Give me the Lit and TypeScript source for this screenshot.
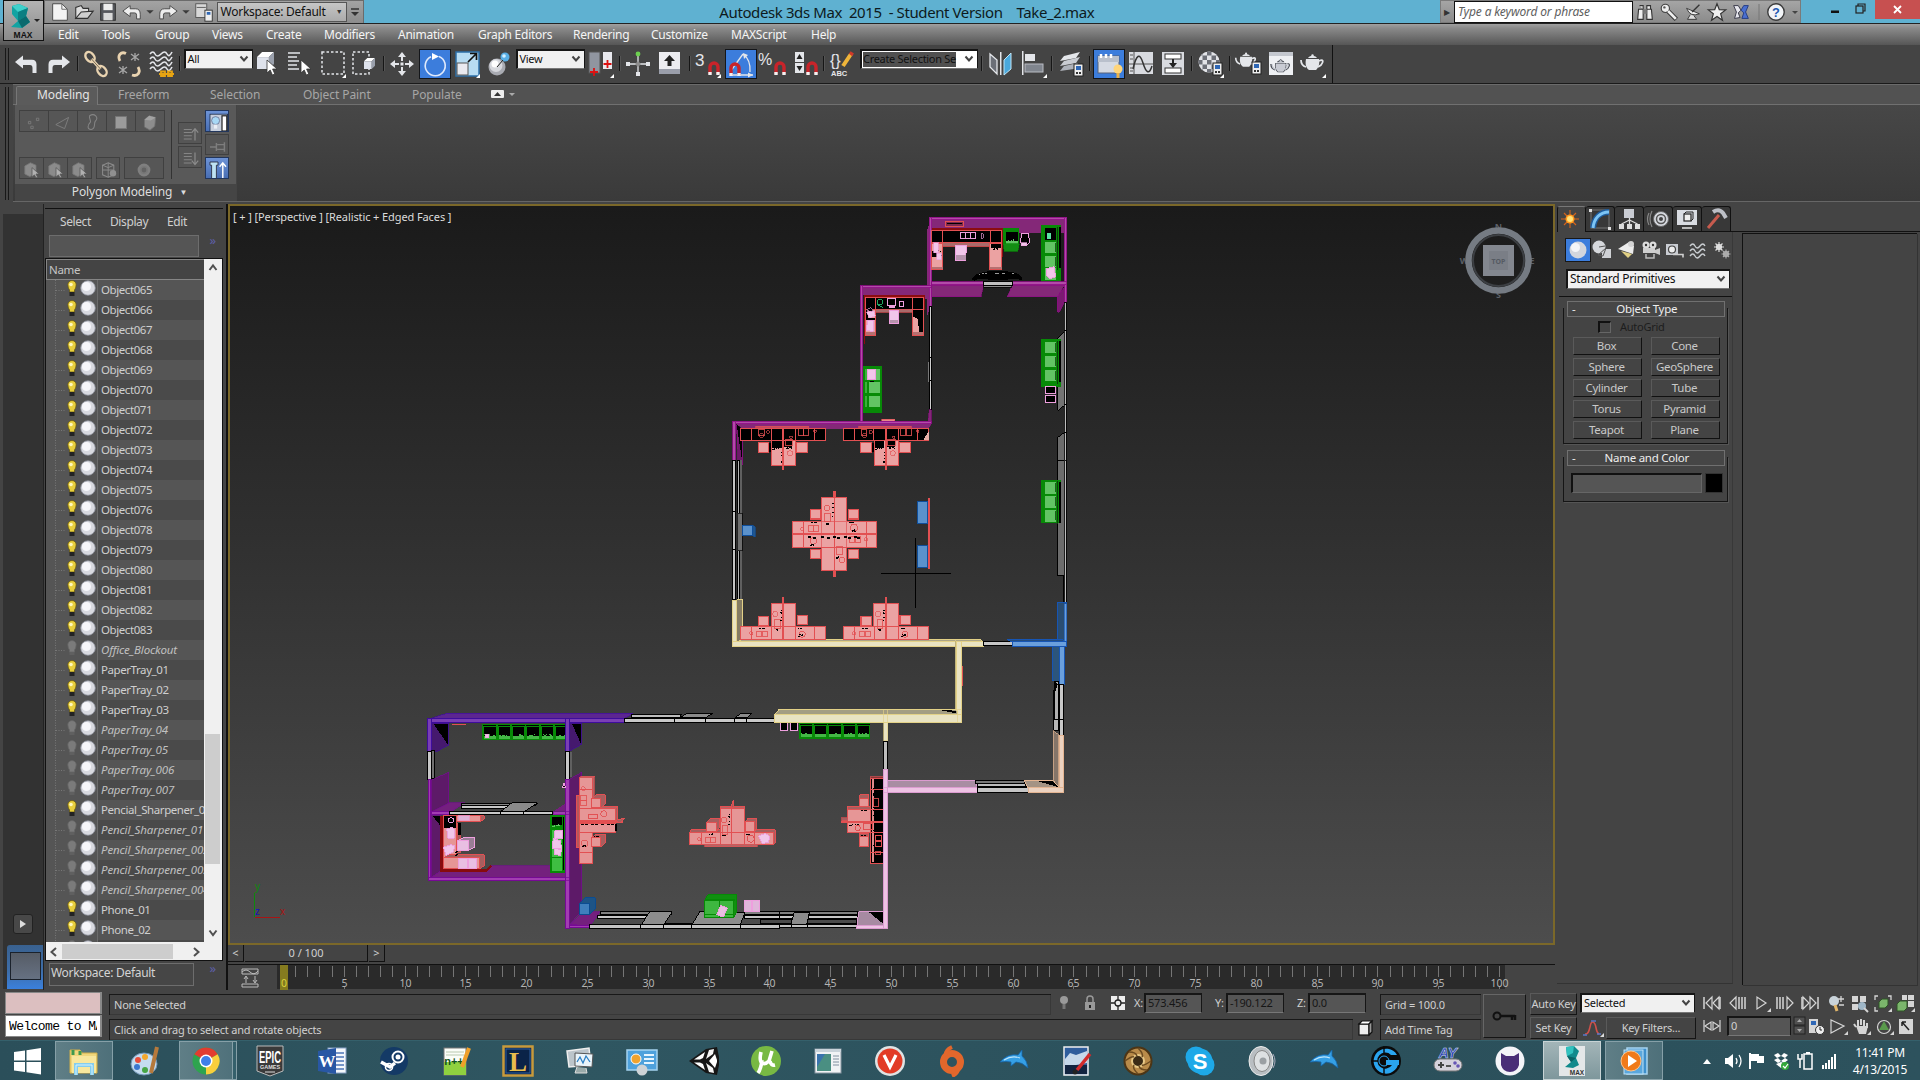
import { LitElement, html, css } from "lit";
import { customElement, state } from "lit/decorators.js";
import { unsafeHTML } from "lit/directives/unsafe-html.js";
import { classMap } from "lit/directives/class-map.js";

/* ---------- small SVG builders ---------- */
const svgBox = (w: number, h: number, body: string, vb = `0 0 ${w} ${h}`) =>
  unsafeHTML(`<svg width="${w}" height="${h}" viewBox="${vb}" fill="none">${body}</svg>`);
const R = (x: number, y: number, w: number, h: number, f = "none", s = "none", sw = 3) =>
  `<rect x="${x}" y="${y}" width="${w}" height="${h}" fill="${f}" stroke="${s}" stroke-width="${sw}"/>`;
const P = (pts: string, f = "none", s = "none", sw = 3) =>
  `<polygon points="${pts}" fill="${f}" stroke="${s}" stroke-width="${sw}"/>`;
const D = (d: string, s = "none", sw = 1.5, f = "none") =>
  `<path d="${d}" fill="${f}" stroke="${s}" stroke-width="${sw}"/>`;
const C = (x: number, y: number, r: number, f = "none", s = "none", sw = 1) =>
  `<circle cx="${x}" cy="${y}" r="${r}" fill="${f}" stroke="${s}" stroke-width="${sw}"/>`;

/* ---------- icons, drawn on a 30x30 grid ---------- */
const W = "#e4e6ea";
const flyout = P("28,25 28,29 24,29", "#fff");
const magnet = (x: number, y: number) =>
  D(`M${x} ${y + 12}v-7a4 4 0 0 1 8 0v7`, "#c8242a", 3.4) + R(x - 1.7, y + 10, 3.4, 3, "#f2f2f2") + R(x + 6.3, y + 10, 3.4, 3, "#f2f2f2");
const cube = (x: number, y: number, s: number) =>
  P(`${x},${y + s * 0.3} ${x + s * 0.3},${y} ${x + s},${y} ${x + s * 0.7},${y + s * 0.3}`, "#fff") +
  R(x, y + s * 0.3, s * 0.7, s * 0.7, "#dfe3ec") +
  P(`${x + s * 0.7},${y + s * 0.3} ${x + s},${y} ${x + s},${y + s * 0.7} ${x + s * 0.7},${y + s}`, "#9aa0ac");
const cursor = (x: number, y: number) =>
  D(`M${x} ${y}v13l3.2-3 2.2 5 2.4-1-2.2-5h4.4z`, "#333", 0.8, "#fff");
const card = (x: number, y: number) =>
  R(x, y, 9, 12, "#eee", "#222", 1) + R(x + 2, y + 2, 5, 4, "#2f67b5") + R(x + 2, y + 8, 2, 2, "#333") + R(x + 5, y + 8, 2, 2, "#333");
const teapot = (c: string) =>
  D("M8 12h13c1 6-1 9-3 11h-7c-3-2-4-6-3-11z", "none", 0, c) + D("M8 20c-3-1-5-4-5-7M21 14c4-2 5 0 2 4l-3 2", c, 1.8) + D("M10 11c2-3 7-3 9 0z", "none", 0, c) + C(14.5, 8.5, 1.2, c);
const waves = (c: string, n = 3) => Array.from({ length: n }, (_, i) => D(`M4 ${5 + i * 5}q3-4 5 0t6 0t6 0t5-2`, c, 1.6)).join("");

const ICONS: Record<string, string> = {
  undo: P("3,13 11,6.500 11,19.500", W) + D("M11 10.800h9q4.500 0 4.500 4.700v8.500h-4v-5q0-3-2.500-3H11z", "none", 0, W),
  redo: P("27,13 19,6.500 19,19.500", W) + D("M19 10.800h-9q-4.500 0-4.500 4.700v8.500h4v-5q0-3 2.500-3H19z", "none", 0, W),
  link: `<ellipse cx="9" cy="8" rx="4" ry="5.500" transform="rotate(-40 9 8)" stroke="#e9d3b0" stroke-width="2.400"/><ellipse cx="21" cy="22" rx="4" ry="5.500" transform="rotate(-40 21 22)" stroke="#e9d3b0" stroke-width="2.400"/>` + D("M10.500 10l9 10", "#e9d3b0", 3.200) + D("M10.500 10l9 10", "#5b5040", .8),
  unlink: D("M12 4.500c-5-2.500-9 2-6 7.500M18 26c6 2 9-3 6-8", "#e9d3b0", 2.800) + D("M17 5l8 6M17 11l8-6M21 4v8M5 18l8 6M5 24l8-6M9 17v8", "#a8a8a8", 1.300),
  bind: waves(W, 4) + D("M13 25h15M15 22.500h4v4.500h-4zM22 22.500h4v4.500h-4z", "#e7a412", 1.800),
  pick: cube(4, 3, 17) + cursor(14, 11),
  byname: D("M3 4h12M3 8h9M3 12h11M3 16h9M3 20h11", W, 1.6) + cursor(16, 11),
  region: `<rect x="4" y="3" width="22" height="22" stroke="${W}" stroke-width="1.500" stroke-dasharray="2.500 2"/>` + flyout,
  windowsel: `<rect x="4" y="3" width="16" height="22" stroke="${W}" stroke-width="1.500" stroke-dasharray="2.500 2"/>` + cube(15, 9, 11),
  move: D("M15 6v6M15 18v6M6 15h6M18 15h6", W, 2) + R(13.500, 13.500, 3, 3, W) + P("15,3 11,8 19,8", W) + P("15,27 11,22 19,22", W) + P("3,15 8,11 8,19", W) + P("27,15 22,11 22,19", W),
  rotate: D("M19 6.500a10 10 0 1 1-8 .2", "#dfe9fb", 1.6) + P("12,3 19,6.500 12,10", "#fff"),
  scale: R(4, 3, 23, 24, "#b8dcf2", "#2d6fa8", 1.5) + R(5, 14, 11, 12, "#e9e9ef", "#555", 1) + D("M16 13l8-8M18 4.500h6.500V11", "#111", 1.7) + flyout,
  pivot: C(13, 18, 8.500, "#a9abb2") + C(12, 16.500, 6.500, "#d6d8dd") + C(11, 15, 3.500, "#fff") + C(21, 8, 4.500, "#58aee4") + C(20, 7, 1.800, "#d2efff") + D("M13 18l6-7", "#222", 1),
  pivotc: R(3, 3, 11, 21, "#9095a0", "#555", 1) + R(17, 3, 9, 17, "#e9e9ee") + D("M8 19v8M4 23h8M21.500 11v8M17.500 15h8", "#d11", 1.800) + flyout,
  manip: D("M15 5v20M5 15h20", W, 1.300) + C(15, 5, 2.400, "#6ccf4f") + R(13, 23, 4, 4, W) + R(3, 13, 4, 4, W) + R(23, 13, 4, 4, W) + P("15,12 18,15 15,18 12,15", "#8d8d8d"),
  keyb: R(4, 3, 21, 19, "#ececf0") + R(4, 20, 21, 5, "#9a9eaa") + P("14.500,6 20,12 9,12", "#222") + R(12.500, 11, 4, 6, "#222"),
  snap: `<text x="2" y="17" font-size="17" font-family="Liberation Sans" fill="${W}">3</text>` + magnet(17, 13) + flyout,
  angle: D("M4 22L17 4M17 4q8 6 7 18M5 25h22", W, 1.300) + P("27,25 22,22.500 22,27.500", W) + P("17,3 22,5 18,9", W) + magnet(5, 13),
  percent: `<text x="0" y="16" font-size="16" font-family="Liberation Sans" fill="${W}">%</text>` + magnet(18, 13),
  spin: R(5, 3, 9, 10, W) + R(5, 14, 9, 10, W) + P("9.500,5 12.500,10 6.500,10", "#222") + P("9.500,22 12.500,17 6.500,17", "#222") + magnet(18, 13),
  named: `<text x="2" y="17" font-size="16" font-family="Liberation Sans" fill="${W}">{}</text><text x="3" y="27" font-size="7.500" font-weight="bold" font-family="Liberation Sans" fill="${W}">ABC</text>` + D("M15 17l8-12", "#efb53a", 4) + D("M22.500 6l1.800-2.600", "#cf3a2a", 4),
  mirror: P("4,5 11,11 11,25 4,18", "#6b6f77", W, 1.300) + R(14, 3, 1.500, 23, W) + P("18,11 25,4 25,20 18,26", "#49a8dc", "#bfe4f6", 1),
  align: R(3, 2, 1.500, 24, W) + R(6, 5, 10, 7, W) + R(6, 15, 18, 8, "#80858e", "#b9bcc3", 1) + flyout,
  layers: P("8,7 24,3 20,9 4,12", W) + P("8,12 24,8 20,14 4,17", "#c9ccd2") + P("8,17 22,14 18,20 4,22", "#aeb2ba") + card(18, 15),
  ribbon: R(4, 6, 21, 17, "#d5dae3", "#56627a", 1) + R(4, 6, 21, 6, "#b9c0cc") + D("M7 4v4M12 4v4M17 4v4", "#fff", 2.500) + C(24, 19, 4.500, "#ffd57a") + R(22.500, 23, 3, 5, "#e9b24a"),
  curve: R(3, 3, 24, 22, "#d9dbe0") + D("M8 3v22M3 15h24", "#555", 1) + D("M7 20q5-22 10-6t9 3", "#333", 1.500) + D("M4 6h3M4 10h3M4 19h3M4 22h3", "#555", 1),
  schem: R(4, 3, 22, 23, "#d9dbe0") + R(7, 5, 16, 5, "#fff", "#333", 1) + R(7, 19, 16, 5, "#fff", "#333", 1) + D("M15 10v6", "#222", 2) + P("15,19 11,14 19,14", "#222"),
  material: `<clipPath id="ball"><circle cx="13" cy="13" r="10.500"/></clipPath><g clip-path="url(#ball)">` + R(2, 2, 22, 22, "#e3e4e8") +
    [0, 1, 2, 3, 4].map((a) => [0, 1, 2, 3, 4].map((b) => ((a + b) % 2 ? "" : R(2 + a * 4.5, 2 + b * 4.5, 4.500, 4.500, "#6d7078"))).join("")).join("") + `</g>` + card(17, 14) + flyout,
  rsetup: `<g transform="translate(-1 -3) scale(.9)">${teapot(W)}</g>` + card(18, 13),
  rframe: R(3, 3, 24, 23, "#eef0f3") + R(3, 3, 24, 4, "#c4c8cf") + `<g transform="translate(2.500 4) scale(.84)">${teapot("#42464e")}<g transform="translate(1.700 2) scale(.88)">${teapot("#c9ccd4")}</g></g>`,
  render: `<g transform="translate(0 -2)">${teapot(W)}</g>` + flyout,
  vert: D("M8 13h3v3h-3zM18 9h3v3h-3zM11 19h3v3h-3z", "#7f7f7f", 1),
  edge: D("M6 17L22 8l-5 14z", "#858585", 1),
  border: D("M12 6c6-4 12 2 7 7-2 3 1 10-5 10s-4-6-1-9c1-2-2-5-1-8z", "#858585", 1.300),
  poly: R(8, 7, 14, 15, "#9b9b9b", "#777", 1),
  elem: P("8,11 14,6 22,8 21,19 15,24 8,20", "#8d8d8d", "#6e6e6e", 1) + P("8,11 14,6 22,8 16,12", "#a3a3a3"),
  cubecur: P("6,10 13,6 20,9 20,21 12,23 6,20", "#8b8b8b", "#777", 1) + D("M15 12v12l3-3 2 4 2-1-2-4h4z", "#555", 1, "#b0b0b0"),
  wirecube: P("7,9 14,6 21,9 21,21 14,24 7,21", "none", "#8b8b8b", 1.300) + D("M14 6v18M7 9l7 3 7-3M7 15h14", "#8b8b8b", 1.200) + C(20, 19, 4, "#909090"),
  ring: C(15, 15, 6.500, "#787878", "#7f7f7f", 3) + C(15, 15, 3, "#636363"),
  listup: D("M6 8h10M6 12h10M6 16h10M6 20h10", "#858585", 1.300) + D("M20 22V8M16 12l4-5 4 5", "#8b8b8b", 1.500),
  listdn: D("M6 8h10M6 12h10M6 16h10M6 20h10", "#858585", 1.300) + D("M20 7v14M16 17l4 5 4-5", "#8b8b8b", 1.500),
  bulbw: R(5, 4, 22, 22, "#c7cfdd", "#1c2b46", 1) + R(20, 6, 6, 19, "#fff", "#222", 1.500) + C(12, 12, 5, "#a8d8f5", "#557", .8) + R(10, 17, 4, 5, "#e9eef5"),
  pin: D("M5 15h8M13 10v10M14 12h9v6h-9M23 9v12", "#7d7d7d", 1.800),
  tarrow: P("5,5 15,5 15,9 13,9 13,26 7,26 7,9 5,9", "#bfe3f3", "#223", 1) + D("M21 26V7M17 11l4-5 4 5", "#fff", 1.800),
};

const SMALL: Record<string, string> = {
  newf: P("4,3 14,3 20,9 20,21 4,21", "#f3f3f3", "#444", 1) + D("M14 3v6h6", "#666", 1),
  open: P("3,19 3,7 9,5 11,8 17,8 17,12", "#ddd", "#333", 1.200) + P("3,19 9,12 22,11 16,19", "#cfcfcf", "#333", 1.200),
  save: R(4, 3, 16, 18, "#55575c", "#2c2c2c", 1) + R(7, 3, 10, 7, "#eee") + R(7, 13, 10, 8, "#d8d8d8"),
  undo: D("M2 11l8-6v3.500h6q5 0 5 6v5h-4v-4q0-2.500-2-2.500h-5V17z", "#444", 1, "#eee"),
  redo: D("M22 11l-8-6v3.500H8q-5 0-5 6v5h4v-4q0-2.500 2-2.500h5V17z", "#444", 1, "#eee"),
  down: P("8,10 16,10 12,14", "#3b3b3b"),
  proj: R(3, 3, 12, 15, "#d8d8d8", "#555", 1) + D("M4 7h10", "#555", 1) + R(13, 10, 8, 12, "#eee", "#333", 1) + R(15, 12, 4, 3, "#2f67b5"),
  binoc: D("M5 9h5v11H4zM14 9h5l1 11h-6zM6 5h4v4M14 9V5h4v4", "#333", 1.200, "#eee") + R(10, 9, 4, 5, "#777"),
  key: C(8, 8, 4.500, "#eee", "#444", 1.200) + D("M11 11l9 9", "#333", 5) + D("M11 11l8.500 8.500", "#eee", 3) + C(7, 7, 1.300, "#555"),
  dish: D("M5 8q4 10 14 6z", "#333", 1, "#eee") + D("M11 12l8-8", "#333", 1.500) + D("M9 15l-3 5h10l-3-4", "#333", 1, "#ddd"),
  star: P("12,3 14.500,9.500 21.500,9.700 16,14 18,21 12,17 6,21 8,14 2.500,9.700 9.500,9.500", "#f0f0f0", "#333", 1.300),
  xchg: P("4,5 9,5 12,10 9,13 11,18 5,19 7,12", "#e8e8ee", "#334", 1) + P("20,5 15,5 12,10 15,13 13,19 20,19 17,12", "#4a6fd0", "#223a80", 1),
  help: C(12, 12, 9, "#f2f4f7", "#3a3a3a", 1.500) + `<text x="12" y="17" text-anchor="middle" font-size="14" font-weight="bold" font-family="Liberation Sans" fill="#2358b0">?</text>`,
};

/* command panel icons, 24x24 */
const CMD: Record<string, string> = {
  create: D("M12 3v18M3 12h18M6 6l12 12M18 6L6 18", "#d8641c", 1.100) + C(12, 12, 4.500, "#ff9a1e") + C(12, 12, 3, "#ffe27a"),
  modify: R(3, 3, 18, 18, "none", "#777", 1) + D("M5 21C6 11 12 5 21 5", "#1f5c9c", 6) + D("M5 21C6 11 12 5 21 5", "#7cc4f4", 3) + R(1, 2, 3, 3, "#ddd") + R(20, 20, 3, 3, "#ddd"),
  hier: R(7, 2, 10, 9, "#c9ccd3") + D("M12.500 11v3M12.500 13l-8 4M12.500 13l8 4M12.500 13v4", "#ddd", 1.300) + R(2, 17, 5, 5, "#ddd") + R(10, 17, 5, 5, "#ddd") + R(18, 17, 5, 5, "#ddd"),
  motion: C(15, 12, 7.500, "#d5d8de", "#666", 1) + C(15, 12, 4.500, "none", "#555", 1.500) + C(15, 12, 2, "#444") + D("M6 4q-4 8 0 16M3 6q-3 6 0 12", "#888", 1.200),
  display: R(2, 3, 20, 15, "#d9dce2") + R(9, 7, 7, 7, "#eee", "#222", 1.200) + D("M9 7l2-2h7v7l-2 2", "#222", 1) + R(7, 20, 10, 2, "#bbb"),
  util: D("M4 21L15 8", "#c65b4e", 3) + D("M9 5q6-4 10 1l3 5", "#bcbfc6", 4),
  sphere: C(12, 12, 8.500, "#d3d6dd") + C(9.500, 9.500, 4.500, "#f4f5f8"),
  shapes: C(9, 9, 6.500, "#d6d8dc") + R(12, 11, 9, 9, "#cfd1d5") + D("M9 9l6-1M13 18l3-8-8 7z", "#555", 1),
  light: P("15,4 20,8 19,16 4,11", "#ececec") + P("7,13 18,16 14,20", "#e0cf84") + C(17, 6, 3, "#d4d4d4"),
  camera: C(8, 7, 3.500, "#ddd") + C(15, 7, 3.500, "#ddd") + C(8, 7, 1.200, "#333") + C(15, 7, 1.200, "#333") + R(5, 10, 12, 5, "#d0d0d0") + P("17,12 22,10 22,17 17,15", "#ccc") + D("M8 16v4h8v-4", "#bbb", 1.500),
  tape: R(4, 6, 12, 11, "#c9ccd2") + C(10, 11.500, 3.500, "#eee", "#444", 1.200) + D("M11 16.500h10v3", "#d0d0d0", 1.600),
  space: D("M4 8q3-4 5 0t5 0t5 0M4 13q3-4 5 0t5 0t5 0M4 18q3-4 5 0t5 0t5 0", "#ccd0d4", 1.300),
  system: C(9, 9, 3, "#eee") + D("M9 4v10M4 9h10M5.500 5.500l7 7M12.500 5.500l-7 7", "#ddd", 1.200) + C(16, 16, 3, "#bbb") + D("M16 11.500v9M11.500 16h9M13 13l6 6M19 13l-6 6", "#aaa", 1.200),
};

/* taskbar icons, 32x32 */
const winIcon = (inner: string) => R(3, 4, 26, 24, "#f1f3f5", "#8a98a3", 1) + R(3, 4, 26, 3, "#c9d3da") + inner;
const dolphin = D("M2 17q8-9 18-7l4-5 0 6q5 4 6 12-6-6-12-6l-5 4 0-4q-5-1-11 0z", "#1565a8", .8, "#35a0e6") + D("M6 15q8-5 16-2", "#bce5fb", 1.200);
const txt = (t: string, x: number, y: number, s: number, f: string, extra = "") =>
  `<text x="${x}" y="${y}" text-anchor="middle" font-size="${s}" fill="${f}" ${extra.includes("font-family") ? "" : 'font-family="Liberation Sans"'} ${extra}>${t}</text>`;
const TASK: [string, string, string][] = [
  ["start", "", P("3,7 14,5.500 14,15.500 3,15.500", "#fff") + P("15.500,5.200 30,3 30,15.500 15.500,15.500", "#fff") + P("3,17 14,17 14,27 3,25.500", "#fff") + P("15.500,17 30,17 30,29.500 15.500,27.300", "#fff")],
  ["files", "on", P("2,5 12,5 14,8 29,8 29,28 2,28", "#f0d77c", "#cfae4a", 1) + D("M5 5v5M12 6v4", "#3f9a4e", 3) + R(4, 11, 24, 17, "#f8e79d") + D("M8 30V20h16v10", "#84cdee", 4) + D("M8 30V20h16v10", "#d4f2ff", 1)],
  ["paint", "", `<ellipse cx="14" cy="19" rx="13" ry="11" fill="#c4dcf0" stroke="#6f93b4"/>` + C(8, 15, 3, "#e84d3a") + C(15, 12, 3, "#f3a72c") + C(7, 22, 3, "#3c78cf") + C(15, 25, 3, "#46a545") + D("M27 2L21 28", "#b5793c", 4)],
  ["chrome", "on wide", C(16, 16, 13.500, "#2ea44f") + D("M16 16L4.300 9.200A13.500 13.500 0 0 1 27.700 9.200z", "none", 0, "#e23c30") + D("M16 16L27.700 9.200A13.500 13.500 0 0 1 16 29.500z", "none", 0, "#f8cf3c") + C(16, 16, 6.500, "#fff") + C(16, 16, 5, "#3f7fe8")],
  ["epic", "", P("3,1 29,1 29,26 16,31 3,26", "#3a3a3a", "#bbb", 1) + txt("EPIC", 16, 18, 17, "#fff", 'font-weight="bold" textLength="22" lengthAdjust="spacingAndGlyphs"') + txt("GAMES", 16, 24, 5.500, "#ddd", 'font-weight="bold"') + D("M11 27h10", "#ddd", 1)],
  ["word", "", R(12, 3, 18, 25, "#f4f7fb", "#88a2c6", 1) + D("M19 8h9M19 12h9M19 16h9M19 20h9M19 24h9", "#4c76b8", 1.300) + P("2,6 20,3 20,29 2,26", "#2857a4") + txt("W", 11, 22, 17, "#fff", 'font-weight="bold" font-family="Liberation Serif"')],
  ["steam", "", C(16, 16, 14, "#143a66") + C(20, 12, 5.500, "none", "#fff", 2) + C(20, 12, 2.500, "#fff") + D("M3 17l9 5 5-4", "#fff", 3.500) + C(11, 22, 3.500, "none", "#fff", 1.600)],
  ["npp", "", R(4, 3, 22, 27, "#fbfdf8", "#777", 1) + R(4, 17, 22, 13, "#8fd13f") + D("M6 7h18M6 10h18", "#b9c9b0", 1) + txt("n++", 14, 20, 11, "#152", 'font-weight="bold"') + D("M29 3L22 22", "#f0a02a", 4)],
  ["lol", "", R(1.5, 1.5, 29, 29, "#0a2348", "#c79a3c", 2.500) + R(4, 4, 24, 24, "none", "#2d5f9e", 1) + txt("L", 16, 26, 27, "#e8bd4c", 'font-weight="bold" font-family="Liberation Serif"')],
  ["monitor", "", P("3,6 25,3 27,20 5,22", "#bcc5cb", "#eee", 1.500) + P("11,8 29,9 28,22 11,21", "#eaf4fa", "#555", 1) + D("M13 17l3-5 3 6 3-7 4 6", "#2d7fc4", 1.300) + D("M13 22l-2 6h12l-1-5", "#ddd", 1, "#9aa")],
  ["control", "", R(1, 5, 30, 20, "#4ea1dc", "#a5d3ef", 1.500) + C(10, 14, 5, "#f1a32f", "#fff", 1) + D("M18 10h10M18 14h10M18 18h10", "#e6f5ff", 2.200) + C(16, 25, 5.500, "#cfd3d6")],
  ["unity", "", P("1,16 18,4 29,2 31,12 31,20 29,30 18,28", "#161616") + P("6,14.500 17,7 15,13 12,14.500", "#fff") + P("6,17.500 12,17.500 15,19 17,25", "#fff") + P("18,14 21,5 26,4 25,9", "#f4f4f4") + P("18,18 25,23 26,28 21,27", "#f4f4f4") + P("27,9 29,15 29,17 27,23 21,16", "#fff")],
  ["torrent", "", C(16, 16, 15, "#78b943") + D("M11 7q-2 9 1 11t7-2l3-10M12 15q-1 9-4 13M20 16q1 5 5 4", "#fff", 3.600)],
  ["app", "", winIcon(R(5, 9, 14, 17, "#4a8f82") + P("5,9 13,9 5,22", "#3973ac") + D("M21 11h6M21 14h6M21 17h6M21 20h6", "#8090a0", 1))],
  ["v", "", C(16, 16, 15, "#dfe3e4") + C(16, 16, 12.500, "#e23b26") + D("M10 10l6 12 6-12", "#fff", 3.200)],
  ["origin", "", C(16, 17, 8.500, "none", "#e2672c", 7) + D("M16 2q-7 3-6 9M16 31q7-3 6-9", "#e2672c", 4)],
  ["dolphin1", "", dolphin],
  ["draw", "", R(4, 2, 24, 28, "#2f5d9c", "#eee", 1.500) + P("5,14 10,8 16,10 27,6 27,18 5,22", "#c6d8ea") + R(5, 20, 22, 9, "#132440") + D("M30 9L17 25", "#d22b2b", 3.500) + C(15, 27, 2.500, "#222")],
  ["gold", "", C(16, 16, 13.500, "#b98b4a", "#4d3515", 2) + C(16, 16, 6, "#3a2a16", "#e8c886", 2) + D("M16 3q6 6 4 9M29 16q-7 5-9 4M16 29q-6-6-4-9M3 16q7-5 9-4M7 7q7 0 8 4M25 25q-7 0-8-4", "#6b4a20", 1.500)],
  ["skype", "", C(12, 12, 10.500, "#1ea9e8") + C(20, 20, 10.500, "#1ea9e8") + C(16, 16, 12.500, "#1ea9e8") + txt("S", 16, 24, 22, "#fff", 'font-weight="bold"')],
  ["speaker", "", `<ellipse cx="15" cy="16" rx="12" ry="14.500" fill="#b9bec2" stroke="#eee"/>` + `<ellipse cx="16" cy="16" rx="8" ry="10.500" fill="#dde0e2" stroke="#888"/>` + C(17, 16, 3.500, "#9a9fa3") + D("M27 9q4 7 0 14", "#aab", 1)],
  ["dolphin2", "", dolphin],
  ["g", "", C(16, 16, 15, "#0b0b0b") + D("M27 10A12.500 12.500 0 1 0 28 20h-6a8 8 0 1 1-1-10z", "none", 0, "#2aa5ef") + R(16, 15, 13, 5, "#2aa5ef") + D("M1 16h15M14 1v30", "#0b0b0b", 1.400) + C(14, 16, 5, "none", "#2aa5ef", 1)],
  ["snes", "", txt("AY", 16, 13, 14, "#2638a8", 'font-weight="bold" font-style="italic" stroke="#dfe3ff" stroke-width=".5"') + `<rect x="2" y="14" width="28" height="12" rx="6" fill="#d5d2dc" stroke="#777"/>` + D("M6 20h6M9 17v6", "#444", 2) + C(23, 18, 1.800, "#6756b5") + C(26, 21, 1.800, "#6756b5") + D("M14 21h5", "#555", 2)],
  ["cat", "", C(16, 16, 14.500, "#f4f4f8") + D("M7 8l5 3h8l5-3v12q-2 7-9 7t-9-7z", "none", 0, "#4a2e77")],
  ["max", "active", R(3, 1, 26, 30, "#e4e7e8") + P("10,2 18,1 23,6 20,13 23,20 17,23 9,22 15,17 11,11", "#118a8c") + P("10,2 18,1 17,8 11,11", "#31c2bf") + P("11,11 15,17 20,13", "#0a6466") + txt("MAX", 21, 30, 6.500, "#333", 'font-weight="bold"')],
  ["wmp", "on", R(9, 3, 20, 26, "#3d8fcb", "#a7d4f1", 1.500) + R(6, 5, 19, 24, "#5aa7dd", "#bfe2f6", 1) + C(13, 16, 10, "#f07a1a", "#ffc48a", 1) + P("10,10 19,16 10,22", "#fff")],
];

/* ---------- viewport scene ---------- */
const g = (x: number, y: number, body: string) => `<g transform="translate(${x} ${y}) scale(.33333)">${body}</g>`;
const RED = "#e25052", SAL = "#eba2a2", PUR = "#b24ba8", PURD = "#8d0c84", PURB = "#842878", GR = "#078a07", GL = "#62c464", PK = "#ee9fde", PKF = "#f1c6ea";
const K = "#000";

/* irregular black shading along an edge */
const specks = (x: number, y: number, w: number, h: number, col = K, seed = 7) => {
  let out = "", s = seed;
  const rnd = () => (s = (s * 73 + 41) % 211) / 211;
  const n = Math.round((w * h) / 90) + 4;
  for (let i = 0; i < n; i++) out += R(Math.round(x + rnd() * w), Math.round(y + rnd() * h), 4, 3, col);
  return out;
};
const cabinetV = (x: number, y: number, n: number, tail: number) => {
  let o = R(x, y, 56, n * 43 + tail, GR, GR, 4) + R(x + 44, y + 2, 3, n * 43, "#0b3d0b") + R(x + 51, y + 4, 5, n * 43 - 6, K);
  for (let i = 0; i < n; i++) o += R(x + 9, y + 5 + i * 42, 33, 35, GL) + R(x + 39, y + 8 + i * 42, 3, 28, "#1c5f1c");
  return o;
};
const cabinetH = (x: number, y: number, n: number) => {
  let o = R(x, y, n * 43, 48, GR);
  for (let i = 0; i < n; i++) o += R(x + 6 + i * 43, y + 9, 34, 30, K) + R(x + 6 + i * 43, y + 34, 34, 9, "#44b746") + specks(x + 6 + i * 43, y + 29, 31, 6, "#44b746", i + 11) + R(x + 3 + i * 43, y + 3, 38, 2, K);
  return o;
};
const deskTop = (x: number) => {
  const L = x - 63;
  return R(x, 655, 254, 38, K, RED) + R(L + 108, 649, 158, 6, "#c04b62", RED, 2) +
    [94, 153, 188, 226, 283].map((v) => R(L + v - 1, 655, 3, 38, RED)).join("") +
    R(L + 155, 693, 72, 73, SAL, RED) + R(L + 157, 694, 28, 20, K) + R(L + 192, 694, 24, 18, K) + specks(L + 157, 710, 26, 8) + specks(L + 196, 708, 26, 6, K, 23) + specks(L + 182, 720, 4, 40) +
    R(L + 187, 655, 5, 126, RED) + R(L + 115, 697, 31, 31, SAL, RED) + R(L + 231, 697, 32, 30, SAL, RED) + R(L + 148, 700, 5, 25, K) +
    R(L + 116, 660, 17, 17, "none", RED, 2.5) + C(L + 125, 676, 7, "none", RED, 2) + C(L + 144, 666, 5, "none", RED, 2) +
    R(L + 235, 657, 15, 19, "none", RED, 2.5) + R(L + 251, 657, 15, 19, "none", RED, 2.5) + C(L + 285, 664, 4, "none", RED, 2) + D(`M${L + 285} 668v12`, RED, 2) +
    R(L + 196, 688, 22, 20, "none", RED, 2.5) + C(L + 213, 682, 4, "none", RED, 2) + C(L + 210, 730, 8, "none", RED, 2);
};
const deskBottom = (L: number) =>
  R(L + 154, 430, 73, 72, SAL, RED) + R(L + 63, 500, 254, 38, SAL, RED) + [94, 153, 226, 283].map((v) => R(L + v, 500, 3, 38, RED)).join("") +
  R(L + 187, 412, 6, 127, RED) + R(L + 115, 469, 31, 27, SAL, RED, 4) + R(L + 232, 467, 31, 27, SAL, RED, 4) +
  R(L + 111, 516, 15, 15, "none", RED, 2.5) + R(L + 128, 516, 15, 15, "none", RED, 2.5) + R(L + 164, 480, 17, 25, "none", RED, 2.5) + C(L + 166, 462, 8, "none", RED, 2) +
  C(L + 247, 523, 9, "none", RED, 2.5) + C(L + 94, 520, 5, "none", RED, 2) + specks(L + 115, 503, 25, 2) + specks(L + 230, 503, 20, 2) + specks(L + 235, 520, 16, 10) + specks(L + 166, 506, 6, 6) + specks(L + 181, 440, 2, 50);

const sceneTop =
  R(635, 28, 398, 42, PURB) + R(628, 22, 412, 7, PUR, PURD, 2.5) + R(628, 22, 7, 268, PUR, PURD, 2.5) + P("622,60 628,40 628,300 622,318", PURB) +
  R(636, 70, 397, 142, "#1d1d1d") + R(636, 54, 212, 7, "#8b0d10") + R(846, 54, 4, 86, "#8b0d10") + R(636, 61, 209, 38, K, RED) + R(667, 99, 142, 10, "#a96a6a", RED, 2.5) +
  R(636, 100, 32, 78, SAL, RED) + R(809, 100, 36, 78, SAL, RED) + R(666, 61, 3, 40, RED) + R(810, 61, 3, 40, RED) + R(637, 122, 14, 20, K) + specks(637, 118, 25, 20) +
  R(813, 101, 30, 14, K) + specks(818, 112, 20, 6) + R(636, 170, 32, 7, "#b57070") + R(810, 170, 35, 7, "#b57070") +
  R(641, 98, 14, 30, PKF, PK, 2) + R(650, 130, 14, 20, PKF, PK, 2) + P("706,106 740,106 736,152 706,152", PKF, PK) + R(708, 135, 29, 16, "#b693ad") +
  R(721, 68, 15, 17, "none", PK) + R(737, 68, 15, 17, "none", PK) + R(753, 68, 14, 17, "none", PK) + `<ellipse cx="787" cy="78" rx="4" ry="8" fill="none" stroke="${PK}" stroke-width="2"/>` +
  R(676, 34, 55, 15, "#7c2a50", RED) + R(680, 38, 47, 5, K) +
  R(850, 54, 48, 48, GR) + R(857, 66, 38, 32, K) + R(857, 92, 38, 10, GL) + specks(857, 87, 34, 6, GL) + P("850,102 898,102 893,124 853,124", "#138e13", GR, 2) + P("904,72 926,70 928,98 920,104 908,106 902,96", K, PK) + R(904, 98, 16, 10, PKF, PK, 2) +
  cabinetV(966, 48, 3, 38) + R(975, 174, 33, 36, GL) + R(975, 53, 33, 36, K) + R(981, 68, 13, 20, "#5be2a2") + P("978,176 1002,170 1007,200 990,206 980,198", PKF, PK, 3) +
  D("M758 207q10-22 74-22t72 18v5q-26-8-46 0h-50q-25-10-44 2z", K, 4, K) + specks(775, 188, 115, 3, "#999") +
  R(1033, 22, 7, 256, PUR, PURD, 2.5) + P("1012,260 1033,232 1033,277 1018,307 1012,305", "#7b1a72", PURD, 2) +
  P("636,226 791,226 783,260 636,260", PURB, PURD, 2) + P("877,226 1033,226 1012,260 862,260", PURB, PURD, 2) + R(636, 215, 155, 10, PUR, PURD, 2.5) + R(878, 215, 162, 10, PUR, PURD, 2.5) +
  R(791, 216, 87, 10, "#c0c0c0", K) + R(791, 228, 84, 4, "#8c8c8c", K, 2) +
  /* middle office */
  P("428,234 628,234 622,266 614,266 614,256 428,256", PURB) + R(421, 227, 213, 7, PUR, PURD, 2.5) + R(421, 227, 8, 420, PUR, PURD, 2.5) +
  R(432, 256, 183, 7, "#8b0d10") + R(432, 256, 4, 146, "#8b0d10") + R(611, 256, 4, 44, "#8b0d10") + R(436, 263, 174, 35, K, RED) + R(465, 263, 3, 35, RED) + R(576, 263, 3, 35, RED) +
  R(466, 298, 111, 9, "#a96a6a", RED, 2) + R(436, 300, 31, 76, SAL, RED) + R(577, 298, 34, 78, K, RED) + P("580,320 592,325 596,350 596,367 580,367", SAL) + R(578, 367, 32, 8, "#b57070") + R(437, 367, 29, 8, "#b57070") +
  R(437, 301, 8, 30, K) + P("440,300 452,293 460,300 456,306", K, PK, 2) + P("440,306 462,304 466,318 448,324", PKF, PK, 2) + P("444,330 462,332 460,364 438,362", PKF, PK, 3) + R(440, 325, 24, 4, K) + R(508, 301, 28, 39, PKF, PK) + R(509, 331, 26, 8, "#b693ad") +
  C(480, 276, 9, "none", "#22a862", 3) + D("M472 284l16 8", "#22a862", 3) + R(502, 265, 25, 22, "none", PK) + R(508, 289, 16, 6, PK) + R(538, 274, 12, 15, "none", PK) +
  R(431, 470, 53, 137, GR, GR) + [476, 517, 558].map((y) => R(446, y, 34, 33, GL) + R(434, y, 6, 33, "#3bb03b")).join("") + R(444, 479, 24, 29, PKF, PK, 3) + specks(448, 512, 15, 2) +
  R(628, 290, 6, 310, "#cfcfcf", K, 3) + R(626, 440, 10, 3, K) + R(626, 510, 10, 3, K) + R(623, 455, 3, 60, "#777") + P("622,660 628,600 634,600 634,640", PURB, PURD, 2) + R(486, 628, 38, 6, "#e88a8a", RED, 2) +
  /* open office, top edge */
  P("50,642 634,642 626,656 66,656", PURB) + R(38, 634, 596, 7, PUR, PURD, 2.5) + R(38, 634, 10, 120, PUR, PURD, 2.5) + P("50,644 68,694 68,765 54,755", "#6e1a68", PURD, 2) + P("50,644 66,660 66,750", K) +
  deskTop(63) + deskTop(371) + P("610,690 626,664 626,690", "#e8b0a8") +
  /* right wall */
  P("1012,386 1033,366 1033,586 1015,601 1012,598", "#737373", K, 3) + P("1012,683 1033,668 1033,785 1012,785", "#6c6c6c", K, 3) + R(1033, 278, 6, 502, "#bdbdbd", K, 2.5) + R(1031, 360, 10, 3, K) + R(1031, 582, 10, 3, K) + R(1031, 667, 10, 3, K) +
  cabinetV(966, 390, 3, 9) + R(977, 530, 29, 21, K, PK) + R(977, 556, 29, 21, K, PK);

const CR = "#e9e3c2", CRD = "#e3d187";
const sceneMid =
  R(38, 0, 10, 420, "#c3c3c3", K) + R(54, 0, 6, 418, "#b5b5b5", K) + R(61, 0, 6, 418, "#606060") + R(52, 160, 15, 112, "#6e6e6e", K, 2) + R(38, 153, 10, 3, K) + R(38, 267, 10, 3, K) + R(67, 198, 31, 29, "#5b92cc", "#0f4f9c") + P("99,197 106,200 106,232 99,227", "#1f568f", "#0f4f9c", 2) +
  /* centre cluster */
  R(306, 112, 74, 220, SAL, RED) + R(217, 184, 253, 38, SAL, RED) + R(217, 224, 253, 38, SAL, RED) + R(306, 184, 74, 78, SAL, RED, 2) + R(342, 112, 3, 220, RED) + R(340, 92, 7, 20, RED) + R(340, 332, 7, 18, RED) + R(217, 220, 253, 4, RED) + R(249, 184, 3, 78, RED) + R(437, 184, 3, 78, RED) +
  R(271, 149, 30, 28, SAL, RED, 4) + R(386, 149, 30, 28, SAL, RED, 4) + R(271, 268, 30, 28, SAL, RED, 4) + R(386, 268, 30, 28, SAL, RED, 4) +
  R(265, 196, 15, 19, "none", RED, 2.5) + R(281, 196, 15, 19, "none", RED, 2.5) + R(390, 230, 15, 17, "none", RED, 2.5) + R(406, 230, 15, 17, "none", RED, 2.5) + R(314, 162, 19, 24, "none", RED, 2.5) + R(350, 260, 17, 24, "none", RED, 2.5) + C(321, 144, 8, "none", RED, 2.5) + C(366, 300, 8, "none", RED, 2.5) + C(402, 203, 11, "none", RED, 2.5) + C(280, 243, 10, "none", RED, 2.5) + C(247, 206, 5, "none", RED, 2) + C(438, 238, 5, "none", RED, 2) +
  [265, 280, 303, 321, 340, 352, 373, 385, 402, 412].map((x, k) => R(x, 229 + (k % 2) * 2, 9, 5, K)).join("") + specks(270, 185, 25, 2) + specks(385, 185, 20, 3) + specks(395, 206, 12, 10) + specks(270, 250, 12, 8) + specks(318, 187, 8, 6) + specks(348, 288, 8, 6) + specks(336, 120, 2, 60) +
  R(592, 125, 31, 65, "#5b92cc", "#0f4f9c") + R(592, 257, 31, 65, "#5b92cc", "#0f4f9c") + R(624, 115, 6, 212, RED) +
  cabinetV(966, 61, 3, -2) + R(1012, 0, 21, 346, "#6c6c6c", K) + R(1033, 0, 6, 430, "#bdbdbd", K, 2.5) + R(1030, 346, 3, 84, K) + cabinetV(966, 61, 3, -2) +
  /* cream walls */
  P("50,420 68,418 68,540 50,556", "#857c63", CRD) + R(38, 421, 12, 138, CR, CRD) + P("50,548 64,539 783,539 790,546", "#aca588", CRD, 3) + R(38, 546, 752, 13, CR, CRD) +
  R(790, 546, 87, 11, "#c6c6c6", K) + deskBottom(0) + deskBottom(308) +
  P("706,540 712,546 712,762 706,752", "#7d7864", CRD, 2) + R(711, 546, 14, 234, CR, CRD) + R(726, 618, 4, 60, RED) +
  /* blue walls */
  R(1012, 428, 28, 116, "#2a4d72", "#1655b4") + R(1033, 432, 7, 126, "#6a9fdc", "#1655b4", 2) + P("862,539 1030,539 1034,546 877,546", "#234d80", "#1655b4") + R(877, 546, 163, 13, "#6a9fdc", "#1655b4") + P("997,560 1020,560 1020,674 997,660", "#2c557c", "#1655b4") + R(1020, 560, 13, 113, "#6a9fdc", "#1655b4") +
  R(1003, 664, 12, 116, "#b0b0b0", K) + P("1003,664 1014,672 1004,700", K) + R(1020, 675, 10, 105, "#c8c8c8", K) +
  R(483, 340, 210, 2.500, K) + R(585.500, 235, 2.500, 208, K);

const VIO = "#7a3fb4", VIOD = "#3e0d9c", MAG = "#a23cb2", MAGD = "#760a94", MB = "#74207e", S2 = "#e69696";
const box3 = (x: number, y: number, w: number, h: number, dx: number, dy: number, f: string, s: string, sh: string) =>
  P(`${x},${y} ${x + dx},${y + dy} ${x + w + dx},${y + dy} ${x + w + dx},${y + h + dy} ${x + w},${y + h} ${x},${y + h}`, sh, s) + R(x, y, w, h, f, s);
const win = (x: number, y: number, w: number) => R(x, y, w, 10, "#c4c4c4", K);
const sceneBL =
  P("30,86 80,70 640,70 613,86", "#5c2690", VIOD, 2) + R(24, 86, 589, 13, VIO, VIOD) + R(24, 86, 12, 98, VIO, VIOD) +
  P("36,100 86,100 86,165 52,184 36,184", "#45196e", VIOD, 2) + P("40,101 84,101 84,164", K) + R(437, 86, 11, 98, VIO, VIOD) + P("450,100 485,100 485,163 450,183", "#45196e", VIOD, 2) + P("456,101 483,101 483,162", K) + R(96, 101, 42, 4, RED) +
  `<svg x="180" y="98" width="255" height="60" viewBox="180 98 255 60">${cabinetH(187, 103, 6)}</svg>` + R(196, 133, 10, 10, PKF, PK, 2) +
  R(23, 184, 11, 84, "#c8c8c8", K) + R(36, 182, 7, 84, "#707070", K) + R(437, 184, 11, 84, "#c8c8c8", K) + R(450, 186, 5, 75, "#606060") +
  P("34,270 86,247 86,340 34,370", "#5d1a68", MAGD, 2) + R(25, 269, 8, 302, MAG, MAGD) + P("34,365 90,338 136,338 92,366", MB, MAGD, 2) + R(34, 365, 56, 10, MAG, MAGD) +
  P("34,377 62,377 62,543 34,562", "#5d1a68", MAGD, 2) + P("38,378 62,378 62,408", K) + P("34,562 62,543 200,543 214,528 448,528 448,562", MB, MAGD, 2) + R(25, 562, 412, 9, MAG, MAGD) +
  P("124,340 352,340 348,346 124,346", "#888", K) + R(125, 346, 140, 10, "#c8c8c8", K) + P("243,364 275,339 352,339 312,366", "#8a8a8a", K) + R(90, 365, 151, 10, "#c8c8c8", K) + R(242, 365, 68, 10, "#c8c8c8", K) + R(311, 365, 86, 10, "#c8c8c8", K) + P("400,364 437,340 437,364", MB) +
  R(400, 365, 37, 10, MAG, MAGD, 2) +
  R(60, 377, 10, 167, "#870b0e") + R(60, 538, 140, 7, "#870b0e") + P("200,538 212,526 216,528 202,545", "#870b0e") +
  R(70, 377, 39, 160, S2, RED) + R(71, 378, 38, 35, K) + C(93, 391, 8, "none", PK, 3) + R(109, 377, 72, 17, S2, RED) + P("181,394 193,388 193,378 181,378", "#a85e5e", RED) + R(112, 400, 11, 88, "#a85e5e", RED, 2) + R(115, 399, 7, 35, K) +
  box3(71, 503, 108, 33, 14, -9, S2, RED, "#a85e5e") + R(116, 377, 32, 14, "#dfb3d8", PK, 2) + box3(113, 453, 32, 29, 19, -11, "#e9bfe2", PK, "#997d95") + P("80,416 98,412 104,420 102,446 84,444", PKF, PK, 3) + P("70,472 92,464 104,468 100,486 78,496", PKF, PK, 3) + R(116, 506, 26, 30, "#e9bfe2", PK) + R(145, 506, 25, 30, "#e9bfe2", PK) + specks(105, 480, 6, 20) +
  R(391, 377, 44, 170, GR, GR) + R(397, 382, 29, 24, K) + [420, 462, 505].map((y) => R(396, y, 31, 38, "#3fbe42")).join("") + specks(397, 402, 28, 6, GL) + P("404,422 426,420 428,444 402,448", PKF, PK) + P("400,446 422,452 424,476 396,474", PKF, PK) + P("402,476 424,478 422,496 404,494", PKF, PK) + R(430, 380, 3, 160, K) +
  P("448,268 485,247 485,665 448,703", "#5d1a68", MAGD, 2) + R(437, 269, 11, 446, MAG, MAGD) + R(437, 365, 11, 10, MAG, MAGD, 2) + R(437, 562, 11, 9, MAG, MAGD, 2) + P("450,704 490,665 541,665 510,707", MB, MAGD, 2) + R(448, 706, 62, 8, MAG, MAGD) + P("427,293 432,278 436,293", K, PK, 3) +
  /* desks on the left of the lower office */
  R(470, 318, 9, 155, "#b5565c", RED) + R(479, 264, 40, 256, S2, RED) + P("479,264 482,259 523,259 519,264", "#b56464", RED, 2) + P("519,264 523,259 523,349 519,349", "#b56464", RED, 2) + R(479, 357, 107, 34, S2, RED) + P("586,357 593,349 593,390 586,392", "#a85e5e", RED) + R(479, 400, 107, 27, S2, RED) + P("516,357 525,350 593,350 586,357", "#b56464", RED) + R(479, 391, 130, 8, RED) + P("586,391 614,384 600,399", "#a85e5e", RED) +
  box3(516, 326, 27, 27, 13, -11, S2, RED, "#a85e5e") + box3(516, 443, 27, 27, 13, -10, S2, RED, "#a85e5e") + R(479, 297, 40, 3, RED) + R(479, 486, 40, 3, RED) + R(482, 317, 17, 15, "none", RED, 2.5) + R(482, 332, 17, 15, "none", RED, 2.5) + R(506, 374, 28, 13, "none", RED, 3) + C(551, 371, 9, "none", RED, 2.5) + C(490, 296, 6, "none", RED, 2) + C(494, 460, 10, "none", RED, 2.5) + [482, 495, 512, 526, 543, 560, 573].map((x) => R(x, 401, 9, 5, K)).join("") + R(586, 402, 6, 20, K) + specks(486, 464, 12, 6) + specks(518, 437, 22, 2) +
  /* lower centre desks */
  R(809, 427, 252, 36, S2, RED) + P("809,427 813,419 902,419 902,427", "#a85e5e", RED) + P("973,427 973,419 1066,419 1066,460 1061,463 1061,427", "#a85e5e", RED) + R(902, 355, 71, 108, S2, RED) + R(902, 349, 71, 6, "#b56464", RED) + R(932, 350, 4, 113, RED) + P("932,353 940,330 940,353", "#a85e5e", RED) +
  box3(860, 399, 30, 25, 9, -13, S2, RED, "#a85e5e") + box3(978, 396, 27, 28, 6, -11, S2, RED, "#a85e5e") + R(902, 426, 71, 3, RED) + R(842, 427, 3, 36, RED) + R(1001, 427, 3, 36, RED) + R(854, 463, 158, 7, "#b56464", RED, 2) + R(857, 442, 14, 17, "none", RED, 2.5) + R(872, 442, 14, 17, "none", RED, 2.5) + R(908, 408, 16, 26, "none", RED, 2.5) + C(912, 390, 9, "none", RED, 2.5) + C(992, 446, 11, "none", RED, 3) + P("1016,438 1036,430 1050,440 1044,458 1026,460", PKF, PK) + C(838, 448, 5, "none", RED, 2) + specks(862, 430, 22, 2) + specks(925, 362, 2, 50) + specks(905, 433, 12, 4) + specks(976, 430, 14, 4) +
  /* upper windows */
  P("634,73 785,73 778,84 634,84", "#bdbdbd", K) + P("780,84 800,70 878,70 856,84", "#8b8b8b", K) + P("945,84 962,70 996,70 980,84", "#8b8b8b", K) + R(613, 86, 450, 11, "#c9c9c9", K) + [763, 856, 941, 979].map((x) => R(x, 86, 3, 11, K)).join("") +
  /* lower windows */
  R(541, 665, 215, 9, "#808080", K) + R(533, 677, 150, 10, "#c6c6c6", K) + P("664,705 688,666 757,666 730,706", "#8d8d8d", K) + P("815,706 840,664 975,668 960,706", "#8d8d8d", K) + R(975, 665, 105, 9, "#808080", K) + R(973, 677, 107, 10, "#c6c6c6", K) + R(525, 702, 140, 3, K) + win(510, 705, 570) + [661, 730, 814, 959].map((x) => R(x, 705, 3, 9, K)).join("") + R(733, 698, 85, 4, K) +
  box3(479, 642, 30, 32, 17, -19, "#3f7fbd", "#0b4c91", "#1d5486") + box3(854, 632, 86, 52, 10, -18, "#3eb740", GR, "#109010") + R(898, 634, 3, 46, GR) + R(854, 626, 90, 8, GR) + R(856, 672, 84, 4, GR) + P("902,646 922,654 910,682 890,674", "#e9bfe2", PK, 3) + R(974, 632, 21, 32, "#e0b6da", PK) + R(998, 632, 21, 34, "#e0b6da", PK);

const LP = "#eec3e4", LPD = "#dc9bd0", PE = "#ecd2c0", PED = "#e5b592";
const sceneBR =
  P("45,74 57,58 590,58 593,73", "#a49d82", CRD) + R(45, 74, 560, 24, CR, CRD) + R(593, 0, 12, 98, CR, CRD) + R(586, 0, 6, 66, "#777260", CRD, 1.5) + P("540,60 588,62 588,70", K) + R(371, 58, 12, 95, CR, CRD, 2) + R(371, 154, 11, 86, "#bdbdbd", K) +
  cabinetH(116, 99, 5) + R(62, 99, 20, 22, K, PK) + R(92, 99, 20, 22, K, PK) +
  R(882, 0, 13, 122, "#b7b7b7", K) + R(898, 0, 12, 137, "#c8c8c8", K) + P("880,122 897,135 897,292 880,274", "#857569", PED, 2) + R(898, 137, 13, 170, PE, PED) +
  P("384,272 645,272 653,294 384,294", "#a98da3", LPD) + R(384, 294, 270, 13, LP, LPD) + R(646, 272, 148, 8, "#777", K) + R(652, 281, 146, 8, "#bcbcbc", K) + R(654, 293, 152, 14, "#c5c5c5", K) + R(650, 289, 150, 4, K) +
  P("792,272 880,272 897,293 804,293", "#a49384", PED) + P("834,274 880,274 897,292", K) + R(806, 294, 104, 13, PE, PED) +
  P("299,327 299,314 326,314 326,327", "#a85e5e", RED) + R(299, 325, 27, 28, S2, RED) + R(263, 357, 70, 70, S2, RED) + R(263, 350, 70, 8, "#a85e5e", RED) + P("299,430 326,430 326,443 299,443", "#a85e5e", RED) + R(299, 441, 27, 28, S2, RED) + R(332, 265, 40, 256, K, RED) + R(333, 260, 38, 5, "#833", RED, 2) + R(335, 267, 6, 250, "#e08a8a") + specks(338, 268, 4, 245) + R(243, 392, 127, 7, RED) + R(245, 383, 18, 10, "#a85e5e", RED, 2) + [297, 357, 427, 486].map((y) => R(333, y, 38, 3, RED)).join("") +
  R(347, 438, 17, 14, "none", RED) + R(347, 455, 17, 14, "none", RED) + R(342, 325, 15, 25, "none", RED, 2.5) + R(310, 402, 28, 16, "none", RED) + C(293, 414, 8, "none", RED, 3) + R(346, 486, 16, 7, "none", RED, 2.5) + specks(268, 401, 38, 4) + specks(300, 358, 25, 3) + specks(302, 434, 20, 3) +
  R(0, 666, 294, 8, "#808080", K) + R(0, 677, 292, 10, "#c6c6c6", K) + R(0, 690, 290, 11, "#4a4a4a", K) + R(0, 705, 290, 9, "#c2c2c2", K) + P("92,705 103,667 148,667 140,705", "#8b8b8b", K) + R(92, 705, 3, 9, K) + R(140, 705, 3, 9, K) +
  P("296,665 372,665 372,706 291,706", "#a78aa2", LPD) + P("326,666 370,666 370,702", K) + R(290, 706, 93, 9, LP, LPD) + R(371, 240, 12, 475, LP, LPD) + R(371, 294, 12, 13, "none", LPD, 2);
const creamCap =
  P("45,74 57,58 590,58 593,73", "#a49d82", CRD) + P("540,60 588,62 588,70", K) + R(45, 74, 560, 24, CR, CRD) + R(371, 58, 12, 40, "none", CRD, 2) + R(593, 58, 12, 40, "none", CRD, 2);

const scene = `<g shape-rendering="crispEdges">${g(720, 210, sceneTop)}${g(760, 690, sceneBR)}${g(720, 460, sceneMid)}${g(420, 690, sceneBL)}${g(760, 690, creamCap)}</g>
<g fill="#5c6067" font-size="9" font-weight="bold" text-anchor="middle"><text x="1498.500" y="230">N</text><text x="1498.500" y="298">S</text><text x="1464" y="264">W</text><text x="1532" y="264">E</text></g>
<circle cx="1498.500" cy="260.500" r="30" stroke="#757b83" stroke-width="6.500"/><circle cx="1498.500" cy="260.500" r="25.500" stroke="#3c3f43" stroke-width="2"/>
<rect x="1483" y="245" width="31" height="31" fill="#83878f"/><rect x="1489" y="251" width="19" height="19" fill="#7a7e86"/><text x="1498.500" y="263.500" font-size="7" font-weight="bold" text-anchor="middle" fill="#555a62">TOP</text>
<path d="M254.500 893v24" stroke="#0d8a0d"/><path d="M255 917.500h25" stroke="#a81414"/><text x="255" y="890" font-size="10" fill="#0d8a0d">y</text><text x="280" y="915" font-size="10" fill="#a81414">x</text><text x="255" y="915" font-size="10" fill="#1414b8">z</text>`;

/* ---------- data ---------- */
const MENUS: [string, number][] = [["Edit", 44], ["Tools", 53], ["Group", 57], ["Views", 54], ["Create", 58], ["Modifiers", 74], ["Animation", 80], ["Graph Editors", 95], ["Rendering", 78], ["Customize", 80], ["MAXScript", 80], ["Help", 40]];

type Tool = { k: "i" | "on" | "sep" | "combo"; c: number; w?: number; n?: string; t?: string };
const i = (n: string, c: number): Tool => ({ k: "i", n, c, w: 30 });
const on = (n: string, c: number): Tool => ({ k: "on", n, c, w: 32 });
const sep = (c: number): Tool => ({ k: "sep", c, w: 2 });
const TOOLS: Tool[] = [
  i("undo", 27), i("redo", 58), sep(78), i("link", 96), i("unlink", 129), i("bind", 161), sep(180), { k: "combo", t: "All", c: 218, w: 69 },
  i("pick", 268), i("byname", 300), i("region", 333), i("windowsel", 364), sep(384), i("move", 402), on("rotate", 435), i("scale", 467), i("pivot", 499), { k: "combo", t: "View", c: 550, w: 69 },
  i("pivotc", 601), sep(620), i("manip", 638), i("keyb", 670), sep(690), i("snap", 708), on("angle", 741), i("percent", 773), i("spin", 805), sep(824), i("named", 843), { k: "combo", t: "Create Selection Se", c: 919, w: 118 },
  sep(982), i("mirror", 1001), i("align", 1034), sep(1052), i("layers", 1071), sep(1090), on("ribbon", 1109), i("curve", 1141), i("schem", 1173), sep(1192), i("material", 1211), sep(1230), i("rsetup", 1249), i("rframe", 1281), i("render", 1313),
];
/* left margin of each tool follows from the centre of the one before it */
const TOOLS_LAID = TOOLS.map((t, n) => {
  const prev = n ? TOOLS[n - 1].c + TOOLS[n - 1].w! / 2 : 0;
  return { ...t, m: t.c - t.w! / 2 - prev };
});

const rows: [string, boolean][] = [
  ...[65, 66, 67, 68, 69, 70, 71, 72, 73, 74, 75, 76, 78, 79, 80, 81, 82, 83].map((n): [string, boolean] => [`Object0${n}`, true]),
  ["Office_Blockout", false], ["PaperTray_01", true], ["PaperTray_02", true], ["PaperTray_03", true], ["PaperTray_04", false], ["PaperTray_05", false], ["PaperTray_006", false], ["PaperTray_007", false],
  ["Pencial_Sharpener_02", true], ["Pencil_Sharpener_01", false], ["Pencil_Sharpener_002", false], ["Pencil_Sharpener_003", false], ["Pencil_Sharpener_004", false], ["Phone_01", true], ["Phone_02", true], ["", false],
];
const rowIcon = (lit: boolean) =>
  `<path d="M9.500 0v20M10 10.500h9" stroke="#777" stroke-dasharray="1 1.500"/>` +
  (lit ? D("M22 6a4.200 4.200 0 1 1 8 0q0 2-1.500 4v2h-5v-2Q22 8 22 6z", "#6b5a10", .8, "#e8cf3e") + C(25, 4.500, 1.800, "#fff8c0") + R(23.500, 12, 5, 4, "#222")
    : D("M22 6a4.200 4.200 0 1 1 8 0q0 2-1.500 4v2h-5v-2Q22 8 22 6z", "#666", .8, "#7b7b7b") + R(23.500, 12, 5, 3, "#606060")) +
  C(42, 8, 7.300, "#d9dae0", "#8b8f9a", .8) + C(40.500, 6.500, 4.500, "#f7f7fb");

const ruler = () => {
  let s = R(277, 0, 1228, 24, "#2a2a2a");
  for (let f = 0; f <= 100; f++) {
    const x = Math.round(283 + f * 12.16) + 0.5;
    s += `<path d="M${x} 1v11${f % 5 ? "" : "M" + x + " 21v3"}" stroke="#757575"/>`;
    if (f % 5 === 0 && f) s += `<text x="${x}" y="22" text-anchor="middle" font-size="10.500" fill="#b4b4b4">${f}</text>`;
  }
  return s + R(280, 0, 8, 25, "#857b1f") + `<text x="284" y="22" text-anchor="middle" font-size="10.500" fill="#d9d23a">0</text>`;
};

const PB = "#d5d5d5";
const PLAY: Record<string, string> = {
  first: D("M2 3v12M18 3v12", PB, 1.5) + P("10,3 10,15 4,9", "none", PB, 1.2) + P("17,3 17,15 11,9", "none", PB, 1.2),
  prev: P("8,3 8,15 2,9", "none", PB, 1.2) + D("M11 3v12M14 3v12M17 3v12", PB, 1.500),
  play: P("5,3 5,15 14,9", "none", PB, 1.2) + P("19,14 19,18 15,18", PB),
  next: P("12,3 12,15 18,9", "none", PB, 1.2) + D("M2 3v12M5 3v12M8 3v12", PB, 1.500),
  last: D("M18 3v12M2 3v12", PB, 1.5) + P("10,3 10,15 16,9", "none", PB, 1.2) + P("3,3 3,15 9,9", "none", PB, 1.2),
  key: P("9,5 9,13 3,9", "none", PB, 1.2) + P("11,5 11,13 17,9", "none", PB, 1.2) + D("M2 3v12M18 3v12", PB, 1.200),
  zoom: C(8, 7, 5, "#c9d3da") + D("M9 11l2 6", "#e2b66a", 3) + D("M15 2v6M12 5h6M13 11h5", PB, 1.300),
  zoomall: R(2, 2, 6, 6, PB) + R(10, 2, 6, 6, PB) + R(2, 10, 6, 6, PB) + C(12, 12, 4, "#9fb7c8") + D("M14 14l4 4", PB, 2),
  ext: D("M2 6V2h3M15 2h3v4M2 13v4h3", PB, 1.300) + P("6,8 9,5 15,5 15,11 12,14 6,14", "#7bb66c", "#2e5526", 1) + P("19,14 19,18 15,18", PB),
  extall: R(6, 1, 5, 5, PB) + R(12, 1, 6, 5, PB) + R(12, 7, 6, 6, PB) + P("1,10 4,7 11,7 11,14 8,17 1,17", "#7bb66c", "#2e5526", 1) + P("19,14 19,18 15,18", PB),
  cfg: R(2, 2, 9, 14, PB) + R(4, 4, 5, 4, "#2f67b5") + C(13, 13, 4.500, "#eee", "#333", 1) + D("M13 10v3h2", "#222", 1),
  fov: P("2,3 2,16 15,9", "none", PB, 1.2) + P("19,14 19,18 15,18", PB),
  pan: D("M4 10l-2-3M6 9V3M9 8V2M12 9V3M15 11V6", PB, 2) + P("4,9 16,9 14,17 7,17", PB) + P("19,14 19,18 15,18", PB),
  orbit: C(9, 10, 6.500, "none", PB, 1.200) + P("9,4 14,13 4,13", "#5a9a4c") + P("19,14 19,18 15,18", PB),
  maxi: R(3, 2, 14, 15, PB) + D("M6 5l7 8M6 5h4M6 5v4", "#222", 1.500),
};

@customElement("app-root")
export class AppRoot extends LitElement {
  @state() private tab = "Modeling";

  static styles = css`
    :host { display: block; width: 1920px; height: 1080px; overflow: hidden; background: #444; color: #d0d0d0; font: 11px/14px "Noto Sans", "Open Sans", sans-serif; cursor: default; }
    * { box-sizing: border-box; }
    svg { display: block; flex: none; }
    .app { display: flex; flex-direction: column; height: 1080px; position: relative; white-space: nowrap; }
    .row { display: flex; }
    /* title bar */
    .title { height: 24px; background: #5fb1d1; display: flex; color: #0d1a20; border-bottom: 1px solid #222; }
    .quick { width: 320px; margin-left: 44px; display: flex; background: linear-gradient(#a3a3a3, #8c8c8c); border: 1px solid #6b6b6b; border-bottom: 0; padding-left: 3px; }
    .quick .q { width: 24px; }
    .quick .q.n { width: 12px; overflow: hidden; }
    .quick .q.n svg { margin-left: -6px; }
    .ws { width: 130px; height: 20px; border: 1px solid #555; background: linear-gradient(#c6c6c6, #ababab); color: #111; font-size: 12px; line-height: 18px; padding: 0 3px; display: flex; justify-content: space-between; letter-spacing: -.25px; margin: 1px 0 0 auto; }
    .ws i { font-style: normal; font-size: 7px; color: #333; }
    .hdl { width: 16px; }
    .name { width: 1078px; text-align: center; font-size: 15px; line-height: 24px; white-space: pre; letter-spacing: -.4px; padding-left: 10px; }
    .search { width: 361px; background: linear-gradient(#a5a5a5, #8b8b8b); display: flex; border: 1px solid #7a7a7a; }
    .search .tri { width: 13px; font-size: 8px; line-height: 21px; padding-left: 3px; color: #333; }
    .search .box { width: 179px; height: 22px; background: #fff; border: 1px solid #111; color: #5e5e5e; font-style: italic; font-size: 12px; line-height: 19px; padding-left: 3px; letter-spacing: -.15px; }
    .winbtn { display: flex; flex: 1; padding-left: 21px; }
    /* menu and main toolbar */
    .menu { height: 21px; background: linear-gradient(#a0a0a0, #8a8a8a 20%, #565656); display: flex; padding-left: 58px; color: #f5f5f5; font-size: 12px; line-height: 21px; letter-spacing: -.25px; }
    .maxbtn { position: absolute; left: 3px; top: 0; width: 41px; height: 41px; border: 1px solid #111; background: linear-gradient(#b4b4b4, #8a8a8a); }
    .tools { height: 38px; width: 1333px; display: flex; align-items: flex-start; padding-top: 4px; border-right: 1px solid #111; position: relative; }
    .toolwrap { border-bottom: 1px solid #1a1a1a; height: 39px; background: #444; }
    .cell { flex: none; height: 30px; }
    .cell.on { background: #3c7ddc; border: 1px solid #14161a; width: 32px; }
    .cell.sep { width: 2px; height: 15px; margin-top: 7px; background: #161616; border-right: 1px solid #555; }
    .grip { position: absolute; left: 5px; top: 3px; width: 4px; height: 32px; border: solid #181818; border-width: 0 1px; }
    .combo { background: #f0f0f0; color: #111; border: 2px solid #151515; border-right-width: 1px; border-bottom: 1px solid #777; height: 20px; display: flex; align-items: center; justify-content: space-between; padding: 0 3px 1px 2px; flex: none; letter-spacing: -.3px; font-size: 11px; }
    .combo.dim span { background: #505050; margin-left: 1px; color: #111; height: 15px; }
    .combo.dim { background: #fff; padding-left: 0; }
    /* ribbon */
    .ribbon { height: 120px; background: #444; padding-left: 13px; position: relative; }
    .rgrip { position: absolute; left: 5px; top: 3px; width: 4px; height: 113px; border: solid #181818; border-width: 0 1px; }
    .rtabs { height: 21px; background: #525252; border-top: 1px solid #6b6b6b; border-bottom: 1px solid #707070; display: flex; font-size: 12px; line-height: 20px; color: #a6a6a6; padding-left: 3px; letter-spacing: -.08px; }
    .rtab { padding-left: 20px; }
    .rtab.sel { color: #e4e4e4; background: #5b5b5b; border: 1px solid #777; border-bottom-color: #5b5b5b; border-radius: 2px 2px 0 0; margin-top: 1px; height: 20px; line-height: 16px; }
    .rbody { height: 97px; display: flex; padding-left: 2px; background: linear-gradient(#474747, #3a3a3a); border-bottom: 1px solid #666; }
    .pm { width: 222px; background: #595959; border-right: 1px solid #444; display: flex; flex-direction: column; }
    .pmi { height: 79px; display: flex; padding: 5px 7px 5px 5px; }
    .pml { width: 153px; display: flex; flex-direction: column; justify-content: space-between; border-right: 1px solid #333; }
    .btns { display: flex; }
    .b { height: 22px; border: 1px solid #404040; margin-left: -1px; display: grid; place-items: center; overflow: hidden; background: #565656; }
    .b svg { width: 24px; height: 24px; }
    .b.blue { background: linear-gradient(#6d93d6, #486eb4); border-color: #22365c; }
    .pmc { display: flex; flex-direction: column; gap: 2px; padding: 12px 4px 0 7px; }
    .pmc.last { padding: 0; }
    .pmt { height: 18px; line-height: 16px; font-size: 12px; background: #454545; color: #ddd; text-align: center; padding-left: 8px; letter-spacing: -.1px; }
    .pmt i { font-style: normal; font-size: 8px; vertical-align: 1px; margin-left: 4px; }
    /* middle */
    .mid { height: 786px; display: flex; }
    .edge { width: 44px; padding: 10px 0 1px 3px; display: flex; flex-direction: column; background: #444; border-right: 1px solid #222; }
    .edgein { flex: 1; background: #323232; display: flex; flex-direction: column; justify-content: flex-end; padding-left: 4px; }
    .play { width: 20px; height: 20px; border: 1px solid #222; border-radius: 3px; background: #484848; margin: 0 0 11px 6px; display: grid; place-items: center; }
    .pane { height: 44px; border-radius: 3px 0 0 0; background: linear-gradient(#39618f, #3e6ea9 60%, #3a80dd); padding: 7px 2px 8px 3px; }
    .pane div { height: 28px; border: 1px solid #1b222c; background: linear-gradient(#565c66, #667182); }
    .list { width: 184px; display: flex; flex-direction: column; border-right: 2px solid #111; padding: 4px 3px 0 1px; }
    .lmenu { height: 27px; border-top: 1px solid #111; display: flex; padding: 5px 0 0 15px; font-size: 12px; line-height: 16px; color: #cfcfcf; letter-spacing: -.4px; }
    .lmenu span:nth-child(1) { width: 50px; }
    .lmenu span:nth-child(2) { width: 57px; }
    .lsearch { height: 23px; display: flex; justify-content: space-between; padding: 0 7px 0 4px; color: #5e5fa8; line-height: 10px; font-size: 13px; }
    .lsearch div { width: 150px; height: 22px; border: 1px solid #6d6d6d; background: #555; }
    .tree { width: 178px; height: 703px; border: 1px solid #111; background: #f0f0f0; display: flex; flex-direction: column; }
    .treebody { height: 684px; display: flex; }
    .items { width: 158px; overflow: hidden; background: #555; height: 683px; }
    .hname { height: 21px; border: 1px solid #858585; border-right: 0; background: #444; line-height: 19px; padding-left: 2px; color: #c4c4c4; font-size: 11.5px; letter-spacing: -.3px; }
    .it { height: 20px; display: flex; background: #555; color: #cfcfcf; }
    .it span { flex: 1; min-width: 0; border-left: 1px solid #6b6b6b; padding-left: 3px; line-height: 20px; overflow: hidden; letter-spacing: -.42px; font-size: 11.5px; }
    .it.odd span { background: #4a4a4a; }
    .it.off span { font-style: italic; color: #c0c0c0; letter-spacing: -.14px; }
    .vs { width: 17px; display: flex; flex-direction: column; align-items: center; padding: 4px 0 2px 0; }
    .vs .th { width: 15px; height: 130px; background: #cdcdcd; margin: 461px 0 65px; }
    .hs { height: 17px; display: flex; align-items: center; padding-left: 3px; }
    .hs .th { width: 111px; height: 15px; background: #cdcdcd; margin: 0 18px 0 3px; }
    .lws { display: flex; justify-content: space-between; padding: 2px 7px 0 4px; color: #5e5fa8; font-size: 13px; line-height: 10px; }
    .lws div { width: 145px; height: 23px; border: 1px solid #6d6d6d; background: #464646; color: #d4d4d4; font-size: 12px; line-height: 17px; padding-left: 1px; letter-spacing: -.3px; }
    .view { width: 1327px; display: flex; flex-direction: column; }
    .vp { height: 741px; border: 2px solid #7b6829; background: linear-gradient(#1a1a1a, #303030 45%, #4d4d4d); position: relative; overflow: hidden; }
    .vp svg { margin: -2px; }
    .vlabel { position: absolute; left: 3px; top: 4px; font-size: 11px; color: #dcdcdc; letter-spacing: -.1px; }
    .slider { height: 19px; display: flex; gap: 1px; padding: 0 0 2px 0; }
    .slider div { border: 1px solid #111; border-width: 0 1px 1px 0; text-align: center; line-height: 16px; height: 17px; }
    .track { height: 26px; border-top: 1px solid #111; }
    /* command panel */
    .cmd { width: 365px; padding: 2px 0 0 2px; display: flex; flex-direction: column; }
    .tabs { display: flex; height: 26px; border-bottom: 1px solid #111; }
    .ct { width: 29px; height: 25px; border: 1px solid #111; border-bottom: 0; border-left: 0; border-radius: 3px 3px 0 0; background: #383838; padding: 0 0 0 2px; }
    .ct.sel { background: #444; height: 26px; border-left: 1px solid #111; border-top-color: #777; padding-left: 0; }
    .cbody { display: flex; height: 754px; }
    .cl { width: 176px; border-right: 1px solid #383838; height: 752px; border-bottom: 1px solid #333; }
    .cats { display: flex; padding: 7px 0 0 9px; height: 30px; }
    .cat { width: 24px; height: 22px; }
    .cat.sel { background: #3c7ddc; outline: 1px solid #181818; }
    .cl .combo { margin: 7px 0 0 9px; width: 164px; height: 20px; font-size: 12px; letter-spacing: -.25px; }
    .rule { margin: 7px 0 0 2px; height: 1px; background: #111; }
    .grp { margin: 11px 4px 0 6px; position: relative; border: 1px solid #151515; border-top: 0; padding: 0 4px; box-shadow: 1px 1px #555; }
    .grp + .grp { margin-top: 13px; }
    .gh { height: 16px; width: 158px; margin-left: -1px; position: relative; top: -7px; border: 1px solid #707070; background: #464646; color: #eee; text-align: center; line-height: 13px; font-size: 11.5px; letter-spacing: -.25px; padding-right: 6px; }
    .gh b { float: left; margin-left: 4px; font-weight: 400; }
    .ag { display: flex; height: 13px; margin: -4px 0 4px 30px; gap: 9px; color: #1d1d1d; line-height: 13px; align-items: center; letter-spacing: -.25px; }
    .ag div { width: 13px; height: 12px; border: 1px solid #111; border-width: 2px 1px 1px 2px; border-right-color: #666; border-bottom-color: #666; }
    .bg { display: grid; grid-template-columns: 69px 69px; gap: 3px 9px; padding: 0 0 4px 5px; }
    .bg div { height: 18px; border: 1px solid #5a5a5a; border-right-color: #111; border-bottom-color: #111; text-align: center; line-height: 15px; color: #c9c9c9; font-size: 11.5px; letter-spacing: -.3px; padding-right: 2px; }
    .nc { display: flex; gap: 3px; padding: 0 0 8px 3px; }
    .nc div { width: 132px; height: 20px; background: #555; border: 2px solid #111; border-right: 1px solid #666; border-bottom: 1px solid #666; }
    .nc i { width: 18px; height: 20px; background: #000; border: 1px solid #333; }
    .cr { width: 175px; margin: 1px 0 0 9px; border: 1px solid #111; border-width: 1px 0 0 1px; height: 752px; box-shadow: 1px 1px #333; }
    /* status */
    .status { height: 50px; display: flex; padding: 2px 0 0 5px; font-size: 11px; letter-spacing: -.2px; }
    .mx { width: 97px; display: flex; flex-direction: column; gap: 1px; }
    .mx div { height: 22px; border: solid #888; border-width: 1px 2px 1px 1px; background: #dcbfc0; }
    .mx div + div { background: #fff; color: #000; font: 13px/21px "Liberation Mono", monospace; padding-left: 3px; letter-spacing: -.6px; }
    .mx span { display: block; width: 88px; height: 20px; overflow: hidden; }
    .st { margin-left: 7px; display: flex; flex-direction: column; gap: 3px; }
    .ln { height: 22px; display: flex; align-items: center; }
    .f { height: 21px; border: solid #181818; border-width: 1px 0 0 1px; box-shadow: inset -1px -1px #383838; line-height: 19px; padding-left: 4px; flex: none; margin-top: 2px; }
    .num { width: 58px; height: 20px; border: 2px solid #161616; border-width: 2px 1px 1px 2px; border-bottom-color: #777; background: #555; color: #161616; line-height: 16px; padding-left: 2px; margin-right: 13px; flex: none; }
    .num.lit { color: #d2d2d2; width: 64px; margin: 0 2px 0 0; }
    .ln > span { flex: none; }
    .kb { width: 43px; height: 44px; border: 1px solid #151515; border-left-color: #666; border-top-color: #666; margin: 2px 4px 0 2px; display: grid; place-items: center; }
    .kk { display: flex; flex-direction: column; gap: 2px; }
    .kk .row:first-child { padding-top: 1px; }
    .bt { border: 1px solid #5a5a5a; border-right-color: #151515; border-bottom-color: #151515; height: 22px; line-height: 20px; text-align: center; }
    .bt.k { width: 47px; margin-right: 3px; }
    .bt.kf { width: 90px; }
    .pl { display: flex; flex-direction: column; gap: 3px; padding: 1px 0 0 6px; }
    .plr { display: flex; align-items: center; height: 20px; }
    .plr > * { flex: none; }
    /* taskbar */
    .task { height: 40px; background: linear-gradient(90deg, #2b4f5a, #2f5661 30%, #2b505b 70%, #2d525d); border-top: 1px solid #35606b; display: flex; }
    .tk { width: 62px; height: 39px; display: grid; place-items: center; flex: none; }
    .tk:first-child { width: 53px; }
    .tk.on, .tk.active { width: 58px; margin: 0 2px; background: linear-gradient(90deg, #5f7e86, #4e707a); border: 1px solid #86a0a8; }
    .tk.wide { width: 58px; padding-right: 5px; border-right: 1px solid #86a0a8; box-shadow: inset -3px 0 #35606b, inset -4px 0 #86a0a8; }
    .tk.active { background: linear-gradient(#a3b5b8, #7e979c); border-color: #c7d3d5; }
    .tray { margin-left: auto; display: flex; align-items: center; }
    .clock { width: 80px; text-align: center; color: #fff; font-size: 12px; line-height: 17px; letter-spacing: -.3px; }
  `;

  private chev(dark = "#444") {
    return svgBox(10, 8, D("M1.500 1.500L5 5.500l3.500-4", dark, 2));
  }

  private tools() {
    return TOOLS_LAID.map((t) => {
      const st = `margin-left:${t.m}px`;
      if (t.k === "sep") return html`<div class="cell sep" style=${st}></div>`;
      if (t.k === "combo") return html`<div class=${classMap({ combo: true, dim: t.w! > 100 })} style="${st};width:${t.w}px"><span>${t.t}</span>${this.chev()}</div>`;
      return html`<div class=${classMap({ cell: true, on: t.k === "on" })} style=${st}>${svgBox(30, 30, ICONS[t.n!])}</div>`;
    });
  }

  private ribbon() {
    const tabs: [string, number][] = [["Modeling", 82], ["Freeform", 92], ["Selection", 93], ["Object Paint", 109], ["Populate", 79]];
    const b = (n: string, w: number, c = "") => html`<div class="b ${c}" style="width:${w}px">${svgBox(30, 30, ICONS[n])}</div>`;
    return html`<div class="ribbon"><div class="rgrip"></div>
      <div class="rtabs">${tabs.map(([t, w]) => html`<div class=${classMap({ rtab: true, sel: t === this.tab })} style="width:${w}px" @click=${() => (this.tab = t)}>${t}</div>`)}
        ${svgBox(34, 18, `<rect x="20" y="5" width="13" height="8" rx="1" fill="#eee"/>` + P("23,11 30,11 26.500,7", "#333"))}${svgBox(14, 18, P("4,8 10,8 7,11", "#aaa"))}</div>
      <div class="rbody"><div class="pm"><div class="pmi">
        <div class="pml"><div class="btns">${["vert", "edge", "border", "poly", "elem"].map((n) => b(n, 30))}</div>
          <div class="btns">${["cubecur", "cubecur", "cubecur"].map((n) => b(n, 25))}<div style="width:5px"></div>${b("wirecube", 24)}<div style="width:5px"></div>${b("ring", 40)}</div></div>
        <div class="pmc">${b("listup", 24)}${b("listdn", 24)}</div>
        <div class="pmc last">${b("bulbw", 24, "blue")}${b("pin", 24)}${b("tarrow", 24, "blue")}</div>
      </div><div class="pmt">Polygon Modeling <i>▼</i></div></div></div></div>`;
  }

  private list() {
    return html`<div class="list"><div class="lmenu"><span>Select</span><span>Display</span><span>Edit</span></div>
      <div class="lsearch"><div></div>»</div>
      <div class="tree"><div class="treebody"><div class="items"><div class="hname">Name</div>
        ${rows.map(([n, lit], k) => html`<div class=${classMap({ it: true, odd: k % 2 === 1, off: !lit })}>${svgBox(51, 20, rowIcon(lit))}<span>${n}</span></div>`)}</div>
        <div class="vs">${svgBox(10, 10, D("M1.500 7L5 2.500 8.500 7", "#505050", 2))}<div class="th"></div>${svgBox(10, 8, D("M1.500 1.500L5 6l3.500-4.500", "#505050", 2))}</div></div>
        <div class="hs">${svgBox(10, 10, D("M7 1L2.500 5 7 9", "#505050", 2))}<div class="th"></div>${svgBox(10, 10, D("M3 1l4.500 4L3 9", "#505050", 2))}</div></div>
      <div class="lws"><div>Workspace: Default</div>»</div></div>`;
  }

  private command() {
    return html`<div class="cmd"><div class="tabs">${["create", "modify", "hier", "motion", "display", "util"].map((n, k) => html`<div class=${classMap({ ct: true, sel: k === 0 })}>${svgBox(24, 24, CMD[n])}</div>`)}</div>
      <div class="cbody"><div class="cl">
        <div class="cats">${["sphere", "shapes", "light", "camera", "tape", "space", "system"].map((n, k) => html`<div class=${classMap({ cat: true, sel: k === 0 })}>${svgBox(24, 22, CMD[n], "0 1 24 22")}</div>`)}</div>
        <div class="combo"><span>Standard Primitives</span>${this.chev()}</div><div class="rule"></div>
        <div class="grp"><div class="gh"><b>-</b>Object Type</div><div class="ag"><div></div>AutoGrid</div>
          <div class="bg">${["Box", "Cone", "Sphere", "GeoSphere", "Cylinder", "Tube", "Torus", "Pyramid", "Teapot", "Plane"].map((t) => html`<div>${t}</div>`)}</div></div>
        <div class="grp"><div class="gh"><b>-</b>Name and Color</div><div class="nc"><div></div><i></i></div></div>
      </div><div class="cr"></div></div></div>`;
  }

  private status() {
    const ic = (n: string, w: number) => html`<div style="width:${w}px">${svgBox(20, 19, PLAY[n])}</div>`;
    return html`<div class="status"><div class="mx"><div></div><div><span>Welcome to MAXScript.</span></div></div>
      <div class="st">
        <div class="ln"><div class="f" style="width:942px">None Selected</div>
          ${svgBox(83, 20, C(13, 7, 4, "#9a9a9a") + R(11.500, 11, 3, 5, "#777") + R(34, 9, 10, 8, "#999") + D("M36 9V6a3 3 0 0 1 6 0v3", "#999", 1.500) + R(38, 12, 2, 3, "#222") + R(60, 3, 14, 14, "#eee") + C(67, 10, 3, "none", "#222", 1.300) + D("M67 3v4M67 13v4M60 10h4M70 10h4", "#222", 1.300))}
          <span style="width:10px">X:</span><div class="num">573.456</div><span style="width:11px">Y:</span><div class="num">-190.122</div><span style="width:11px">Z:</span><div class="num">0.0</div><div class="f" style="width:101px;margin-left:1px">Grid = 100.0</div></div>
        <div class="ln"><div class="f" style="width:1244px">Click and drag to select and rotate objects</div>
          ${svgBox(27, 20, R(6, 6, 10, 11, "#eee", "#111", 1.200) + P("6,6 9,3 19,3 16,6", "#fff", "#111", 1.200) + P("16,6 19,3 19,14 16,17", "#999", "#111", 1.200))}<div class="f" style="width:101px">Add Time Tag</div></div></div>
      <div class="kb">${svgBox(26, 12, C(5, 6, 3.500, "none", "#111", 2) + D("M9 6h14M20 6v4M23 5v5", "#111", 2.500))}</div>
      <div class="kk"><div class="row"><div class="bt k">Auto Key</div><div class="combo" style="width:115px">Selected ${this.chev()}</div></div>
        <div class="row"><div class="bt k">Set Key</div>${svgBox(26, 22, D("M5 17C11 18 9 4 13 5s2 10 6 12", "#d0504a", 1.600) + D("M3 18h4M11 4h5M17 17h4", "#5a78c8", 1.500) + P("24,16 24,20 20,20", "#ddd"))}<div class="bt kf">Key Filters...</div></div></div>
      <div class="pl"><div class="plr">${ic("first", 26)}${ic("prev", 24)}${ic("play", 23)}${ic("next", 25)}${ic("last", 26)}${ic("zoom", 24)}${ic("zoomall", 23)}${ic("ext", 23)}${ic("extall", 20)}</div>
        <div class="plr">${ic("key", 25)}<div class="num lit">0</div>${svgBox(14, 20, R(1, 1, 11, 8, "#505050", "#222", 1) + R(1, 10, 11, 8, "#505050", "#222", 1) + P("6.500,3 9,6 4,6", "#aaa") + P("6.500,16 9,13 4,13", "#aaa"))}${ic("cfg", 22)}${ic("fov", 23)}${ic("pan", 23)}${ic("orbit", 21)}${ic("maxi", 20)}</div></div></div>`;
  }

  private tray() {
    return svgBox(142, 30, P("5,18 9,13 13,18", "#fff") + P("27,12 30,12 35,8 35,22 30,18 27,18", "#fff") + D("M38 12q2 3 0 6M41 9q4 6 0 12", "#fff", 1.300) + D("M52 7v16", "#fff", 2) + P("53,8 61,8 61,10 66,10 66,17 59,17 59,15 53,15", "#fff") +
      P("76,9 80,7 83,10 79,12", "#fff") + P("90,9 86,7 83,10 87,12", "#fff") + P("76,14 80,12 83,15 80,17", "#fff") + P("90,14 87,12 83,15 86,17", "#fff") + P("78,18 83,16 88,18 83,22", "#fff") + C(87, 20, 4, "#35a83b") + D("M85 20l2 2 3-4", "#fff", 1.200) +
      R(106, 8, 8, 15, "none", "#fff", 1.500) + R(108, 6, 4, 2, "#fff") + D("M100 8v5h4v-5M102 13v9", "#fff", 1.500) + R(124, 19, 2, 4, "#fff") + R(127, 17, 2, 6, "#fff") + R(130, 14, 2, 9, "#fff") + R(133, 11, 2, 12, "#fff") + R(136, 8, 2, 15, "#fff"));
  }

  render() {
    return html`<div class="app">
      <div class="title">
        <div class="quick">${["newf", "open", "save", "undo", "down", "redo", "down", "proj"].map((n) => html`<div class="q ${n === "down" ? "n" : ""}">${svgBox(24, 22, SMALL[n], "0 0 24 24")}</div>`)}
          <div class="ws">Workspace: Default<i>▼</i></div><div class="hdl">${svgBox(16, 22, D("M4 8h8", "#333", 1.500) + P("4,11 12,11 8,15", "#333"))}</div></div>
        <div class="name">Autodesk 3ds Max  2015  - Student Version    Take_2.max</div>
        <div class="search"><div class="tri">▶</div><div class="box">Type a keyword or phrase</div>${["binoc", "key", "dish", "star", "xchg"].map((n) => svgBox(24, 22, SMALL[n], "0 0 24 24"))}${svgBox(11, 22, D("M6 3v16", "#777", 1))}${svgBox(24, 22, SMALL.help, "0 0 24 24")}${svgBox(12, 22, P("4,10 10,10 7,13", "#444"))}</div>
        <div class="winbtn">${svgBox(53, 20, R(9, 10.500, 8, 2.500, "#111") + R(34, 6, 7, 7, "none", "#222", 1.200) + D("M36 6V4h7v7h-2", "#222", 1.200))}${svgBox(45, 19, R(0, 0, 45, 19, "#c75050") + D("M19 6l7 7M26 6l-7 7", "#fff", 1.800))}</div>
      </div>
      <div class="menu">${MENUS.map(([t, w]) => html`<span style="width:${w}px">${t}</span>`)}</div>
      <div class="maxbtn">${svgBox(39, 39, P("8,5 15,3 24,7 22,15 26,21 18,27 7,26 14,20 8,13", "#12a3a2") + P("8,5 15,3 24,7 14,11", "#3fd0cb") + P("14,11 24,7 22,15 14,20", "#0c7f82") + P("14,20 22,15 26,21 18,27", "#0a6a6e") + P("30,18 36,18 33,21", "#222") + txt("MAX", 19, 37, 8.5, "#111", 'font-weight="bold"'))}</div>
      <div class="toolwrap"><div class="tools"><div class="grip"></div>${this.tools()}</div></div>
      ${this.ribbon()}
      <div class="mid">
        <div class="edge"><div class="edgein"><div class="play">${svgBox(8, 10, P("1,1 7,5 1,9", "#ddd"))}</div><div class="pane"><div></div></div></div></div>
        ${this.list()}
        <div class="view"><div class="vp">${svgBox(1327, 741, scene, "228 204 1327 741")}<div class="vlabel">[ + ] [Perspective ] [Realistic + Edged Faces ]</div></div>
          <div class="slider"><div style="width:16px">&lt;</div><div style="width:123px">0 / 100</div><div style="width:16px">&gt;</div></div>
          <div class="track">${svgBox(1327, 25, ruler() + D("M242 4h16v5h-16zM242 7q4-4 8 0t8-1M246 18v-6M244 14l2-3 2 3M255 11v6M253 15l2 3 2-3M242 19h16v3h-16z", "#bbb", 1), "228 0 1327 25")}</div></div>
        ${this.command()}
      </div>
      ${this.status()}
      <div class="task">${TASK.map(([, c, body]) => html`<div class="tk ${c}">${svgBox(32, 32, body)}</div>`)}
        <div class="tray">${this.tray()}<div class="clock">11:41 PM<br />4/13/2015</div></div></div>
    </div>`;
  }
}
